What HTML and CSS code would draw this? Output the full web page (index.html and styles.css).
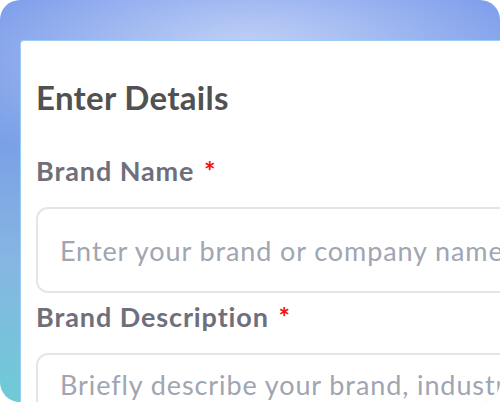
FILE: index.html
```html
<!DOCTYPE html>
<html lang="en">
<head>
<meta charset="utf-8">
<title>Enter Details</title>
<link rel="stylesheet" href="styles.css">
</head>
<body>
<div class="frame">
  <div class="card">
    <h1 class="title">Enter Details</h1>
    <form class="form">
      <div class="field">
        <label class="label" for="brand-name">Brand Name <span class="req">*</span></label>
        <input class="input" id="brand-name" type="text" placeholder="Enter your brand or company name">
      </div>
      <div class="field">
        <label class="label" for="brand-desc">Brand Description <span class="req">*</span></label>
        <textarea class="input textarea" id="brand-desc" placeholder="Briefly describe your brand, industry and audience"></textarea>
      </div>
    </form>
  </div>
</div>
</body>
</html>
```

FILE: styles.css
```css
* { box-sizing: border-box; }
html, body { margin: 0; padding: 0; background: #ffffff; }
body { width: 500px; height: 402px; overflow: hidden; font-family: "Lato", "Inter", sans-serif; }

.frame {
  width: 500px;
  height: 402px;
  border-radius: 20px;
  padding: 40px 0 0 20px;
  overflow: hidden;
  background:
    radial-gradient(ellipse 360px 130px at 50% 12%, rgba(198, 213, 248, 0.95), rgba(198, 213, 248, 0) 100%),
    linear-gradient(180deg, #6a8ee8 0%, #7aa0e6 35%, #86b6e2 65%, #6ecbd6 100%);
}

.card {
  height: 100%;
  background: #ffffff;
  border-top: 1px solid #9ccbf3;
  border-left: 1px solid #9ccbf3;
  border-radius: 4px 0 0 0;
  padding: 34px 0 0 15px;
  overflow: hidden;
}

.title {
  margin: 0;
  font-size: 33px;
  line-height: 44px;
  font-weight: 700;
  letter-spacing: 0.3px;
  color: #515151;
}

.form { display: flex; flex-direction: column; margin-top: 34px; }

.field { display: flex; flex-direction: column; }

.label {
  font-size: 27px;
  line-height: 36px;
  font-weight: 700;
  letter-spacing: 0.9px;
  color: #6f6f7b;
  white-space: nowrap;
}
.req { color: #f01010; margin-left: 2px; }

.input {
  margin-top: 18px;
  width: 520px;
  height: 86px;
  border: 2px solid #e3e5ea;
  border-radius: 12px;
  padding: 0 22px;
  font-family: inherit;
  font-size: 27px;
  letter-spacing: 0.9px;
  color: #333;
  background: #fff;
  outline: none;
}
.input::placeholder { color: #a0a5b2; opacity: 1; }

.field + .field .label { margin-top: 6px; }

.textarea {
  height: 120px;
  padding-top: 13px;
  line-height: normal;
  resize: none;
  overflow: hidden;
  white-space: nowrap;
}
```
